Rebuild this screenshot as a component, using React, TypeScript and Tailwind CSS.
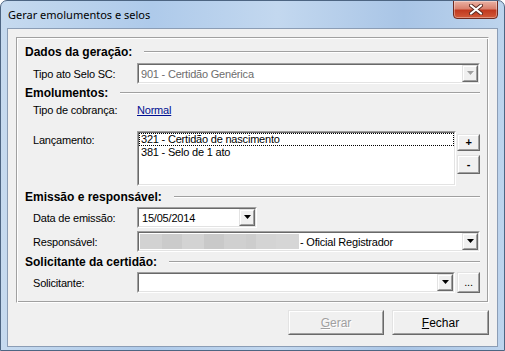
import React from "react";

function Sunken({ className = "", inner = "", children }: { className?: string; inner?: string; children?: React.ReactNode }) {
  return (
    <div className={`border border-t-[#a0a0a0] border-l-[#a0a0a0] border-r-white border-b-white ${className}`}>
      <div className={`h-full border border-t-[#696969] border-l-[#696969] border-r-[#e3e3e3] border-b-[#e3e3e3] bg-white ${inner}`}>{children}</div>
    </div>
  );
}

function Raised({ className = "", inner = "", children }: { className?: string; inner?: string; children?: React.ReactNode }) {
  return (
    <div className={`border border-t-[#e3e3e3] border-l-[#e3e3e3] border-r-[#696969] border-b-[#696969] ${className}`}>
      <div className={`h-full border border-t-white border-l-white border-r-[#a0a0a0] border-b-[#a0a0a0] bg-[#f0f0f0] flex items-center justify-center ${inner}`}>{children}</div>
    </div>
  );
}

function Arrow({ disabled = false }: { disabled?: boolean }) {
  return (
    <svg width="7" height="5" viewBox="0 0 7 5">
      {disabled ? <path d="M1 1h6L4 4z" fill="#ffffff" /> : null}
      <path d="M0 0h7L3.5 4z" fill={disabled ? "#a0a0a0" : "#000000"} />
    </svg>
  );
}

function Combo({ w, disabled = false, children }: { w: string; disabled?: boolean; children?: React.ReactNode }) {
  return (
    <Sunken className={`h-[21px] ${w}`} inner="flex items-stretch">
      <div className={`flex-1 flex items-center pl-[2px] overflow-hidden whitespace-nowrap ${disabled ? "text-[#6d6d6d]" : "text-black"}`}>{children}</div>
      <Raised className="w-[16px]">
        <Arrow disabled={disabled} />
      </Raised>
    </Sunken>
  );
}

function Heading({ text, mt }: { text: string; mt: string }) {
  return (
    <div className={`flex items-center h-[16px] pl-[8px] pr-[8px] ${mt}`}>
      <span className="font-bold text-[12px] tracking-normal text-black">{text}</span>
      <div className="flex-1 ml-[12px] h-[2px] border-t border-t-[#a0a0a0] border-b border-b-white" />
    </div>
  );
}

function Row({ label, mt, children, top = false }: { label: string; mt: string; children: React.ReactNode; top?: boolean }) {
  return (
    <div className={`flex ${top ? "items-start" : "items-center"} pl-[16px] ${mt}`}>
      <div className={`w-[104px] shrink-0 ${top ? "pt-[3px] leading-[13px]" : "h-[16px] leading-[16px]"}`}>{label}</div>
      {children}
    </div>
  );
}

export default function App() {
  return (
    <div className="w-[505px] h-[351px] box-border flex flex-col rounded-t-[7px] border border-[#4d6582] bg-[linear-gradient(90deg,#c6daef,#aecaea_30%,#c3d8ef_55%,#a9c5e6_80%,#bdd4ed)] overflow-hidden font-['Liberation_Sans',Arial,sans-serif] text-[11px] leading-[16px] tracking-[-0.2px] text-black">
      <div className="h-[27px] flex items-start shrink-0">
        <div className="pl-[7px] pt-[6px] text-[11px] tracking-normal font-['Noto_Sans',sans-serif] leading-[16px] text-black">Gerar emolumentos e selos</div>
        <div className="ml-auto mr-[6px] w-[45px] h-[19px] -mt-[1px] rounded-b-[4px] border border-[#6e2a20] bg-[linear-gradient(180deg,#eab2a4_0%,#d9826f_45%,#c1391f_55%,#d25a3a_100%)] flex items-center justify-center shadow-[inset_0_0_0_1px_rgba(255,255,255,0.35)]">
          <svg width="14" height="11" viewBox="0 0 14 11">
            <path d="M2 1.5 L12 9.5 M12 1.5 L2 9.5" stroke="#5a2a22" strokeWidth="4" strokeLinecap="round" />
            <path d="M2 1.5 L12 9.5 M12 1.5 L2 9.5" stroke="#ffffff" strokeWidth="2.2" strokeLinecap="round" />
          </svg>
        </div>
      </div>
      <div className="mx-[6px] h-[319px] shrink-0 border border-[#8b9db5] bg-[#f0f0f0] flex flex-col">
        <div className="mx-[8px] mt-[8px] h-[266px] border border-t-[#a0a0a0] border-l-[#a0a0a0] border-r-white border-b-white shadow-[inset_1px_1px_0_#ffffff,inset_-1px_-1px_0_#a0a0a0] flex flex-col">
          <Heading text="Dados da geração:" mt="mt-[6px]" />
          <Row label="Tipo ato Selo SC:" mt="mt-[3px]">
            <Combo w="w-[343px]" disabled>
              901 - Certidão Genérica
            </Combo>
          </Row>
          <Heading text="Emolumentos:" mt="mt-[1px]" />
          <Row label="Tipo de cobrança:" mt="mt-[1px]">
            <span className="h-[16px] leading-[16px] text-[#000f90] underline">Normal</span>
          </Row>
          <Row label="Lançamento:" mt="mt-[13px]" top>
            <Sunken className="w-[319px] h-[55px]">
              <div className="h-[13px] leading-[11px] border border-dotted border-black pl-[1px]">321 - Certidão de nascimento</div>
              <div className="h-[13px] leading-[13px] pl-[2px]">381 - Selo de 1 ato</div>
            </Sunken>
            <div className="flex flex-col ml-[1px]">
              <Raised className="w-[23px] h-[17px] mt-[3px]" inner="font-bold text-[11px] leading-none">+</Raised>
              <Raised className="w-[23px] h-[19px] mt-[4px]" inner="font-bold text-[11px] leading-none">-</Raised>
            </div>
          </Row>
          <Heading text="Emissão e responsável:" mt="mt-[3px]" />
          <Row label="Data de emissão:" mt="mt-[2px]">
            <Combo w="w-[120px]">
              <span className="pl-[1px]">15/05/2014</span>
            </Combo>
          </Row>
          <Row label="Responsável:" mt="mt-[3px]">
            <Combo w="w-[343px]">
              <div className="flex h-[15px] items-stretch -ml-[1px]">
                <div className="w-[22px] bg-[#d2d2d2]" />
                <div className="w-[20px] bg-[#cbcbcb]" />
                <div className="w-[22px] bg-[#d3d3d3]" />
                <div className="w-[20px] bg-[#c9c9c9]" />
                <div className="w-[22px] bg-[#d0d0d0]" />
                <div className="w-[10px] bg-[#cdcdcd]" />
                <div className="w-[20px] bg-[#d4d4d4]" />
                <div className="w-[23px] bg-[#d6d6d6]" />
              </div>
              <span className="pl-[1px]">- Oficial Registrador</span>
            </Combo>
          </Row>
          <Heading text="Solicitante da certidão:" mt="mt-[2px]" />
          <Row label="Solicitante:" mt="mt-[2px]">
            <Combo w="w-[318px]" />
            <Raised className="w-[23px] h-[21px] ml-[2px]" inner="text-[11px] leading-none">...</Raised>
          </Row>
        </div>
        <div className="flex justify-end gap-[8px] mt-[7px] mr-[8px]">
          <Raised className="w-[96px] h-[25px]" inner="text-[12px] tracking-normal text-[#a0a0a0]">
            <span className="[text-shadow:1px_1px_0_#ffffff]"><span className="underline">G</span>erar</span>
          </Raised>
          <Raised className="w-[97px] h-[25px]" inner="text-[12px] tracking-normal">
            <span><span className="underline">F</span>echar</span>
          </Raised>
        </div>
      </div>
    </div>
  );
}
